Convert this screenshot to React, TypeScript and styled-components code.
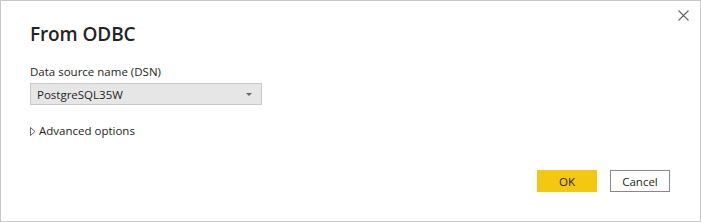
import styled, { createGlobalStyle } from 'styled-components'

const GlobalStyle = createGlobalStyle`
  html, body {
    margin: 0;
    padding: 0;
    background: #ffffff;
  }
  * {
    box-sizing: border-box;
  }
`

const Dialog = styled.div`
  position: relative;
  width: 701px;
  height: 222px;
  border: 1px solid #c8c8c8;
  background: #ffffff;
  font-family: 'Open Sans', 'Noto Sans', sans-serif;
  color: #252423;
  display: flex;
  flex-direction: column;
  padding: 20px 30px 0 29px;
`

const CloseButton = styled.button`
  position: absolute;
  top: 5px;
  right: 8px;
  width: 18px;
  height: 18px;
  padding: 0;
  border: none;
  background: transparent;
  display: flex;
  align-items: center;
  justify-content: center;
  cursor: pointer;
`

const Title = styled.h1`
  margin: 0;
  font-size: 19px;
  font-weight: 600;
  line-height: 26px;
  color: #252423;
  letter-spacing: -0.1px;
`

const Label = styled.div`
  margin-top: 17px;
  font-size: 11.5px;
  line-height: 16px;
  color: #252423;
`

const Select = styled.div`
  margin-top: 3px;
  width: 232px;
  height: 22px;
  background: #e6e6e6;
  border: 1px solid #c8c8c8;
  display: flex;
  align-items: center;
  justify-content: space-between;
  padding: 0 9px 0 6px;
  font-size: 11.5px;
  color: #252423;
`

const Caret = styled.span`
  width: 0;
  height: 0;
  border-left: 3px solid transparent;
  border-right: 3px solid transparent;
  border-top: 3px solid #666666;
`

const Expander = styled.div`
  margin-top: 18px;
  display: flex;
  align-items: center;
  gap: 3px;
  font-size: 11.5px;
  line-height: 16px;
  color: #252423;
  cursor: pointer;
`

const Footer = styled.div`
  margin-top: auto;
  margin-bottom: 29px;
  display: flex;
  justify-content: flex-end;
  gap: 13px;
`

const Button = styled.button<{ $primary?: boolean }>`
  width: 60px;
  height: 22px;
  padding: 0;
  font-family: inherit;
  font-size: 11.5px;
  color: #252423;
  background: ${(p) => (p.$primary ? '#f2c811' : '#ffffff')};
  border: 1px solid ${(p) => (p.$primary ? '#f2c811' : '#8a8886')};
  cursor: pointer;
`

export default function App() {
  return (
    <>
      <GlobalStyle />
      <Dialog>
        <CloseButton aria-label="Close">
          <svg width="11" height="11" viewBox="0 0 11 11">
            <path d="M0.5 0.5 L10.5 10.5 M10.5 0.5 L0.5 10.5" stroke="#666666" strokeWidth="1.1" fill="none" />
          </svg>
        </CloseButton>
        <Title>From ODBC</Title>
        <Label>Data source name (DSN)</Label>
        <Select>
          <span>PostgreSQL35W</span>
          <Caret />
        </Select>
        <Expander>
          <svg width="6" height="9" viewBox="0 0 6 9">
            <path d="M0.5 0.5 L5 4.5 L0.5 8.5 Z" stroke="#666666" strokeWidth="1" fill="none" />
          </svg>
          <span>Advanced options</span>
        </Expander>
        <Footer>
          <Button $primary>OK</Button>
          <Button>Cancel</Button>
        </Footer>
      </Dialog>
    </>
  )
}
